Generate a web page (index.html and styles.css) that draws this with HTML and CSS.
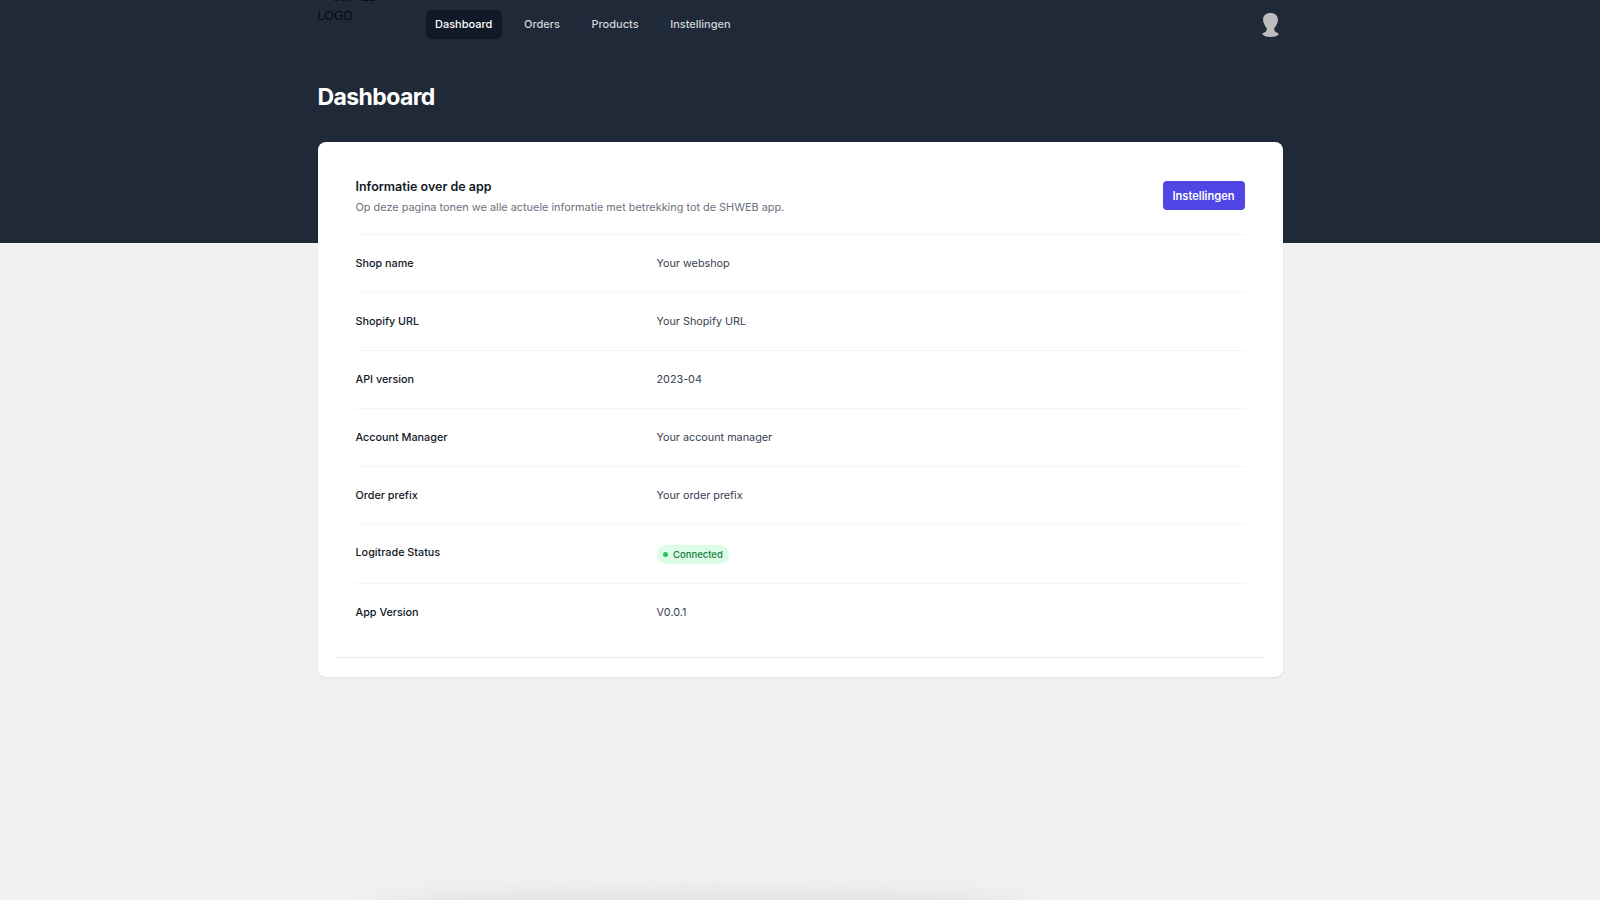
FILE: index.html
```html
<!DOCTYPE html>
<html lang="nl">
<head>
<meta charset="utf-8">
<title>Dashboard</title>
<link rel="stylesheet" href="styles.css">
</head>
<body>
<header class="hero">
  <div class="wrap">
    <nav class="topbar">
      <div class="logo"><span class="logo-top">UNITED</span><br>LOGO</div>
      <div class="links">
        <a class="link active">Dashboard</a>
        <a class="link">Orders</a>
        <a class="link">Products</a>
        <a class="link">Instellingen</a>
      </div>
      <svg class="avatar" viewBox="0 0 16 24" preserveAspectRatio="none" aria-hidden="true">
        <path d="M8 0C4 0 1 2.6 1 6.5C1 10 2.6 12.5 4 14.5C4.8 15.8 4.6 17.5 3.6 18.4C2.6 19.4 .6 20 0 21C2 23.4 5 24 8 24C11 24 14 23.4 16 21C15.4 20 13.4 19.4 12.4 18.4C11.4 17.5 11.2 15.8 12 14.5C13.4 12.5 15 10 15 6.5C15 2.6 12 0 8 0Z"/>
      </svg>
    </nav>
    <h1 class="title">Dashboard</h1>
  </div>
</header>
<main class="wrap content">
  <section class="card">
    <div class="card-head">
      <div class="card-text">
        <h2 class="card-title">Informatie over de app</h2>
        <p class="card-sub">Op deze pagina tonen we alle actuele informatie met betrekking tot de SHWEB app.</p>
      </div>
      <button class="btn">Instellingen</button>
    </div>
    <dl class="list">
      <div class="row"><dt>Shop name</dt><dd>Your webshop</dd></div>
      <div class="row"><dt>Shopify URL</dt><dd>Your Shopify URL</dd></div>
      <div class="row"><dt>API version</dt><dd>2023-04</dd></div>
      <div class="row"><dt>Account Manager</dt><dd>Your account manager</dd></div>
      <div class="row row-short"><dt>Order prefix</dt><dd>Your order prefix</dd></div>
      <div class="row row-status"><dt>Logitrade Status</dt><dd><span class="badge"><i class="dot"></i>Connected</span></dd></div>
      <div class="row row-last"><dt>App Version</dt><dd>V0.0.1</dd></div>
    </dl>
    <div class="card-foot"></div>
  </section>
</main>
<div class="glow"></div>
</body>
</html>
```
FILE: styles.css
```css
* { box-sizing: border-box; }
html, body { height: 100%; }
body {
  margin: 0;
  height: 900px;
  overflow: hidden;
  position: relative;
  background: #f1f1f1;
  font-family: Inter, "Liberation Sans", sans-serif;
  color: #111827;
}
.wrap { width: 965px; margin: 0 auto; }
.hero { background: #1f2937; height: 243px; }
.topbar { display: flex; align-items: center; height: 49px; position: relative; }
.logo {
  width: 108px;
  flex: none;
  font: 12.3px/19px "Liberation Sans", Arial, sans-serif;
  color: #0c0c0c;
  align-self: flex-start;
  margin-top: -12px;
}
.logo-top { padding-left: 14.5px; }
.links { display: flex; gap: 12.6px; flex: 1; }
.link {
  padding: 0 9.5px;
  height: 29px;
  line-height: 29px;
  border-radius: 5px;
  font-size: 11px;
  font-weight: 500;
  color: #d1d5db;
}
.link.active { background: #111827; color: #fff; }
.avatar { width: 17px; height: 24px; fill: #bdbdbd; margin-right: 4px; margin-top: 1px; }
.title {
  margin: 33px 0 0;
  font-size: 23px;
  line-height: 30px;
  font-weight: 700;
  letter-spacing: -0.6px;
  color: #fff;
}
.content { margin-top: -101px; position: relative; }
.card {
  background: #fff;
  border-radius: 8px;
  height: 535px;
  padding: 0 38px;
  position: relative;
  box-shadow: 0 1px 2px rgba(0,0,0,.08);
}
.card-head {
  display: flex;
  justify-content: space-between;
  align-items: center;
  height: 93px;
  padding-top: 15px;
  border-bottom: 1px solid #f3f4f6;
}
.card-text { padding-top: 2px; }
.card-title { margin: 0; font-size: 12.5px; line-height: 20px; font-weight: 600; }
.card-sub { margin: 0; font-size: 10.9px; line-height: 20px; color: #6b7280; }
.btn {
  border: 0;
  background: #4f46e5;
  color: #fff;
  height: 29px;
  width: 82px;
  padding: 0;
  border-radius: 4px;
  font: 600 11.1px Inter, sans-serif;
}
.list { margin: 0; }
.row {
  display: flex;
  align-items: center;
  height: 58px;
  border-bottom: 1px solid #f3f4f6;
  font-size: 10.8px;
}
.row-last { border-bottom: 0; height: 56px; }
.row-short { height: 57px; }
.row-status { height: 60px; }
.row dt { width: 301px; font-weight: 500; color: #111827; }
.row dd { margin: 0; color: #374151; }
.row-status dt { margin-top: -3px; }
.row-status dd { margin-top: 1px; }
.badge {
  display: inline-flex;
  align-items: center;
  height: 19px;
  padding: 0 6.5px;
  gap: 5px;
  border-radius: 10px;
  background: #dcfce7;
  color: #15803d;
  font-size: 9.5px;
  font-weight: 500;
}
.dot { width: 5px; height: 5px; border-radius: 50%; background: #22c55e; }
.card-foot {
  position: absolute;
  left: 19px;
  right: 19px;
  bottom: 19px;
  border-top: 1px solid #e9e9e9;
}
.glow {
  position: absolute;
  left: 370px;
  width: 660px;
  top: 895px;
  height: 30px;
  border-radius: 50%;
  background: #dcdcdc;
  filter: blur(12px);
}
```
